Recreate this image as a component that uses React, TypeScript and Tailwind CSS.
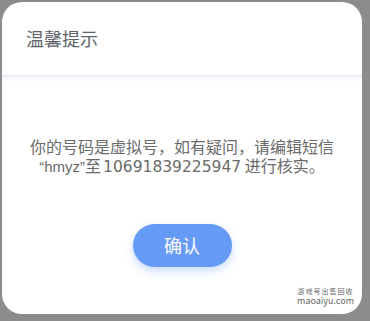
import React from "react";

const font = { fontFamily: '"Noto Sans CJK SC", "Noto Sans", sans-serif' };
const latin = { fontFamily: '"Liberation Sans", "Noto Sans", sans-serif' };
const digits = { fontFamily: '"DejaVu Sans", "Noto Sans", sans-serif' };

export default function App() {
  return (
    <div
      className="w-[370px] h-[321px] bg-[#8c8c8c] pt-[2px] pl-[2px] pr-[8px] pb-[7px]"
      style={font}
    >
      <div className="relative w-full h-full bg-white rounded-[20px] flex flex-col overflow-hidden">
        <div className="h-[73px] pl-[24px] pt-[24px]">
          <div className="text-[18px] leading-[24px] text-[#5d6268]">温馨提示</div>
        </div>
        <div className="h-[2px] bg-[#e9eef6]" />
        <div className="h-[6px] bg-gradient-to-b from-[#f6f8fb] to-white" />
        <div className="pt-[54px] flex flex-col items-center text-[16px] leading-[19px] text-[#6a6a6a]">
          <div>你的号码是虚拟号，如有疑问，请编辑短信</div>
          <div>
            <span style={latin} className="text-[15px]">“hmyz”</span>至
            <span style={digits} className="text-[15.5px] ml-[2px]">10691839225947</span> 进行核实。
          </div>
        </div>
        <div className="flex justify-center pt-[47px]">
          <div className="w-[99px] h-[43px] rounded-full bg-[#659af6] text-white text-[18px] flex items-center justify-center shadow-[0_4px_8px_rgba(102,153,245,0.35)]">
            确认
          </div>
        </div>
        <div className="absolute right-[8px] bottom-[9px] flex flex-col items-center gap-[2px] text-[#666]">
          <div className="text-[7px] leading-[7px] tracking-[1px]">游戏号出售回收</div>
          <div className="text-[9px] leading-[8px]">maoaiyu.com</div>
        </div>
      </div>
    </div>
  );
}
